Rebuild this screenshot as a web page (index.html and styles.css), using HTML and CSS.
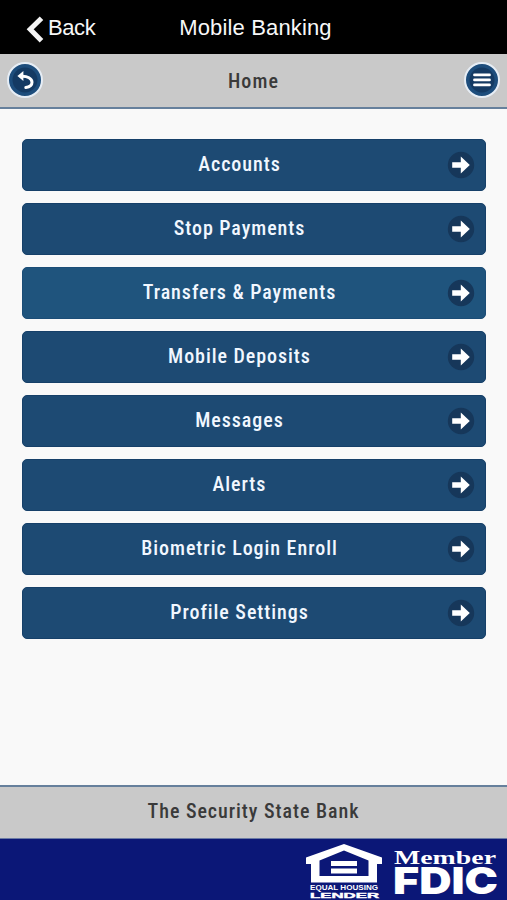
FILE: index.html
```html
<!DOCTYPE html>
<html lang="en">
<head>
    <meta charset="UTF-8">
    <meta name="viewport" content="width=device-width, initial-scale=1.0">
    <title>Mobile Banking</title>
    <link rel="stylesheet" href="styles.css">
</head>
<body>

    <!-- shared arrow icon -->
    <svg width="0" height="0" class="defs">
        <symbol id="arrow" viewBox="0 0 28 28">
            <circle cx="14" cy="14" r="13.2" fill="#16375a"/>
            <path d="M5.2 11.2h8.600V5.500l9 8.500-9 8.500v-5.700H5.200z" fill="#fff"/>
        </symbol>
    </svg>

    <header class="topbar">
        <a class="back">
            <svg width="18" height="27" viewBox="0 0 18 27"><path d="M15.5 2.2L4.2 13.3l11.3 11.5" fill="none" stroke="#f4f4f4" stroke-width="5"/></svg>
            <span>Back</span>
        </a>
        <h1>Mobile Banking</h1>
    </header>

    <nav class="subbar">
        <button class="round" type="button" aria-label="Back">
            <svg width="36" height="36" viewBox="0 0 36 36">
                <circle cx="18" cy="18" r="12.5" fill="#143a63"/>
                <path d="M14 14.4c6.5-.4 11 2 11 5.8 0 3-2.6 4.8-6.2 5.3" fill="none" stroke="#fff" stroke-width="3" stroke-linecap="round"/>
                <path d="M10.4 13.9l6-5v10.2z" fill="#fff"/>
            </svg>
        </button>
        <h2>Home</h2>
        <button class="round" type="button" aria-label="Menu">
            <svg width="36" height="36" viewBox="0 0 36 36">
                <circle cx="18" cy="18" r="12.5" fill="#143a63"/>
                <path d="M10.5 12.9h15M10.5 17.9h15M10.5 22.9h15" fill="none" stroke="#fff" stroke-width="2.8" stroke-linecap="round"/>
            </svg>
        </button>
    </nav>

    <main class="menu">
        <a class="item"><span>Accounts</span><svg><use href="#arrow"/></svg></a>
        <a class="item"><span>Stop Payments</span><svg><use href="#arrow"/></svg></a>
        <a class="item active"><span>Transfers &amp; Payments</span><svg><use href="#arrow"/></svg></a>
        <a class="item"><span>Mobile Deposits</span><svg><use href="#arrow"/></svg></a>
        <a class="item"><span>Messages</span><svg><use href="#arrow"/></svg></a>
        <a class="item"><span>Alerts</span><svg><use href="#arrow"/></svg></a>
        <a class="item"><span>Biometric Login Enroll</span><svg><use href="#arrow"/></svg></a>
        <a class="item"><span>Profile Settings</span><svg><use href="#arrow"/></svg></a>
    </main>

    <div class="bank">The Security State Bank</div>

    <footer class="legal">
        <svg class="lender" width="78" height="58" viewBox="0 0 78 58">
            <path fill="#fff" fill-rule="evenodd" d="M39 2L1 15.5V22h5v18.5h66V22h5v-6.5zM39 8.5l24.5 10V34h-49V18.5z"/>
            <path fill="#fff" d="M26 19h26v5H26zM26 26.5h26v5H26z"/>
            <text class="housing" x="5" y="48" textLength="68" lengthAdjust="spacingAndGlyphs">EQUAL HOUSING</text>
            <text class="lender-name" x="5" y="56" textLength="69" lengthAdjust="spacingAndGlyphs">LENDER</text>
        </svg>
        <svg class="fdic" width="106" height="58" viewBox="0 0 106 58">
            <text class="member" x="0" y="21.5" textLength="102" lengthAdjust="spacingAndGlyphs">Member</text>
            <text class="fdic-name" x="-1" y="52" textLength="105" lengthAdjust="spacingAndGlyphs">FDIC</text>
        </svg>
    </footer>

</body>
</html>
```

FILE: styles.css
```css
* {
    box-sizing: border-box;
}
body {
    margin: 0;
    height: 900px;
    display: flex;
    flex-direction: column;
    overflow: hidden;
    background-color: #f9f9f9;
    color: #3a3a3a;
    font-family: "Roboto Condensed", Roboto, sans-serif;
    font-stretch: 75%;
    font-size: 20px;
    font-weight: 500;
    letter-spacing: 0.95px;
}
h1, h2 {
    margin: 0;
    font-size: inherit;
    font-weight: inherit;
}
.defs {
    position: absolute;
}
.topbar {
    height: 54px;
    display: grid;
    grid-template-columns: 1fr auto 1fr;
    align-items: center;
    padding-top: 2px;
    background-color: #000;
    color: #f8f8f8;
    font-family: "Liberation Sans", Arial, sans-serif;
    font-size: 22px;
    font-weight: 400;
    letter-spacing: 0.15px;
}
.back {
    display: flex;
    align-items: center;
    gap: 4px;
    padding-left: 26px;
    letter-spacing: -0.4px;
}
.back svg {
    margin-top: 3px;
}
.topbar h1 {
    padding-left: 4px;
}
.subbar {
    height: 55px;
    display: flex;
    align-items: center;
    justify-content: space-between;
    padding: 0 7px 1px;
    background-color: #c9c9c9;
    border-bottom: 2px solid #66809c;
}
.subbar h2 {
    padding-top: 2px;
    letter-spacing: 1.1px;
}
.round {
    width: 36px;
    height: 36px;
    padding: 0;
    border: 2px solid #e6edf5;
    border-radius: 50%;
    background-color: #1d4d7c;
    display: flex;
    align-items: center;
    justify-content: center;
}
.round svg {
    flex: none;
}
.menu {
    flex: 1;
    display: flex;
    flex-direction: column;
    gap: 12px;
    padding: 30px 21px 0 22px;
}
.item {
    height: 52px;
    display: flex;
    align-items: center;
    padding-right: 10px;
    border: 1px solid #164069;
    border-radius: 5px;
    background-color: #1d4a73;
    color: #f1f7ff;
}
.item.active {
    border-color: #1b4d77;
    background-color: #1f547d;
}
.item span {
    flex: 1;
    padding: 0 0 2px 9px;
    text-align: center;
}
.item svg {
    width: 28px;
    height: 28px;
}
.bank {
    height: 54px;
    display: flex;
    align-items: center;
    justify-content: center;
    padding-bottom: 3px;
    background-color: #c9c9c9;
    border-top: 2px solid #66809c;
    border-bottom: 1px solid #6b7ba5;
}
.legal {
    height: 61px;
    display: flex;
    justify-content: flex-end;
    gap: 11px;
    padding: 3px 7px 0 0;
    background-color: #0b1777;
}
.legal text {
    fill: #fff;
    letter-spacing: 0;
    font-stretch: normal;
}
.housing {
    font: 700 8px "Liberation Sans", Arial, sans-serif;
}
.lender-name {
    font: 700 8px "Liberation Sans", Arial, sans-serif;
    stroke: #fff;
    stroke-width: 0.4px;
}
.member {
    font: 700 19px "Liberation Serif", serif;
}
.fdic-name {
    font: 900 37px Inter, sans-serif;
}
```
